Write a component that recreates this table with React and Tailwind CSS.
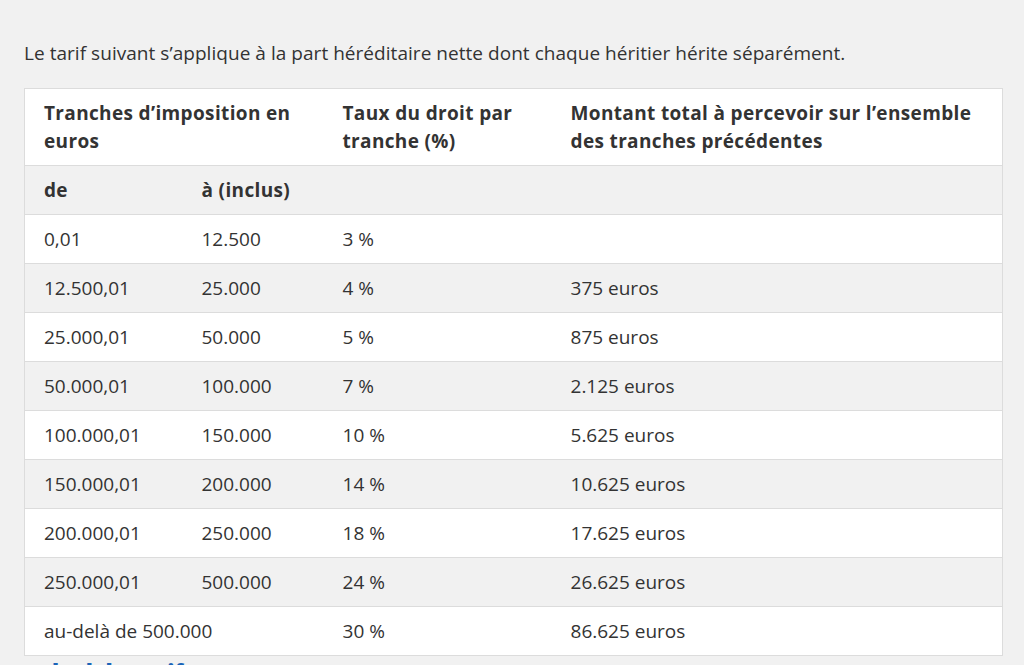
const rows = [
  ["0,01", "12.500", "3 %", ""],
  ["12.500,01", "25.000", "4 %", "375 euros"],
  ["25.000,01", "50.000", "5 %", "875 euros"],
  ["50.000,01", "100.000", "7 %", "2.125 euros"],
  ["100.000,01", "150.000", "10 %", "5.625 euros"],
  ["150.000,01", "200.000", "14 %", "10.625 euros"],
  ["200.000,01", "250.000", "18 %", "17.625 euros"],
  ["250.000,01", "500.000", "24 %", "26.625 euros"],
];

const td = "px-[19px] py-[10px] align-top";

export default function App() {
  return (
    <div
      className="min-h-[665px] bg-[#f1f1f1] px-6 pt-[39px] text-[19px] leading-[28px] text-[#333]"
      style={{ fontFamily: '"Open Sans", "Noto Sans", sans-serif' }}
    >
      <p className="tracking-[0.04px]">
        Le tarif suivant s’applique à la part héréditaire nette dont chaque
        héritier hérite séparément.
      </p>
      <table className="mt-[21px] w-[979px] table-fixed border-collapse border border-[#dcdcdc]">
        <colgroup>
          <col className="w-[158px]" />
          <col className="w-[141px]" />
          <col className="w-[228px]" />
          <col />
        </colgroup>
        <thead className="tracking-[0.35px]">
          <tr className="border-b border-[#dcdcdc] bg-white font-extrabold">
            <th colSpan={2} className={`${td} text-left`}>
              Tranches d’imposition en euros
            </th>
            <th className={`${td} text-left`}>Taux du droit par tranche (%)</th>
            <th className={`${td} text-left`}>
              Montant total à percevoir sur l’ensemble des tranches précédentes
            </th>
          </tr>
          <tr className="border-b border-[#dcdcdc] bg-[#f1f1f1] font-extrabold">
            <th className={`${td} text-left`}>de</th>
            <th className={`${td} text-left`}>à (inclus)</th>
            <th className={td}></th>
            <th className={td}></th>
          </tr>
        </thead>
        <tbody>
          {rows.map((r, i) => (
            <tr
              key={r[0]}
              className={`border-b border-[#dcdcdc] ${i % 2 ? "bg-[#f1f1f1]" : "bg-white"}`}
            >
              {r.map((c, j) => (
                <td key={j} className={td}>
                  {c}
                </td>
              ))}
            </tr>
          ))}
          <tr className="bg-white">
            <td colSpan={2} className={td}>
              au-delà de 500.000
            </td>
            <td className={td}>30 %</td>
            <td className={td}>86.625 euros</td>
          </tr>
        </tbody>
      </table>
      <h3 className="mt-[2px] text-[22px] font-extrabold leading-[28px] text-[#1a64b8]">
        Calcul du tarif
      </h3>
    </div>
  );
}
